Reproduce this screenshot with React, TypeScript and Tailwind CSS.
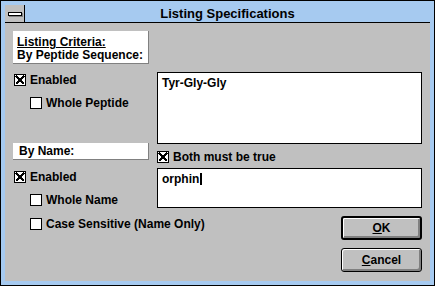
import React from 'react';

const font = { fontFamily: '"Liberation Sans", Arial, sans-serif' };

const CheckBox: React.FC<{ checked?: boolean }> = ({ checked }) => (
    <div className="w-[12px] h-[12px] shrink-0 bg-white border border-black flex items-center justify-center">
        {checked && (
            <svg width="10" height="10" viewBox="0 0 10 10" shapeRendering="crispEdges">
                <path d="M1 1 L9 9 M9 1 L1 9" stroke="#000" strokeWidth="2" />
            </svg>
        )}
    </div>
);

const Check: React.FC<{ label: string; checked?: boolean; className?: string }> = ({ label, checked, className }) => (
    <div className={`flex items-center gap-[4px] h-[12px] whitespace-nowrap ${className ?? ''}`}>
        <CheckBox checked={checked} />
        <span>{label}</span>
    </div>
);

const App: React.FC = () => {
    return (
        <div
            className="w-[435px] h-[286px] border border-black bg-[#a6caf0] p-[4px] flex flex-col text-[12px] font-bold text-black leading-[13px]"
            style={font}
        >
            {/* title bar */}
            <div className="flex h-[18px] border-b border-black shrink-0">
                <div className="w-[20px] h-full bg-[#c0c0c0] border-r border-black flex items-center justify-center">
                    <div className="w-[14px] h-[4px] bg-white border border-black shadow-[1px_1px_0_#808080]" />
                </div>
                <div className="flex-1 flex items-center justify-center text-[13px]">Listing Specifications</div>
            </div>

            {/* client */}
            <div className="flex-1 bg-[#c0c0c0] flex px-[8px] pt-[8px] gap-[8px]">
                <div className="w-[136px] flex flex-col">
                    <div className="h-[33px] bg-white border-r border-b border-[#808080] pl-[4px] pt-[5px] whitespace-nowrap">
                        <div className="underline">Listing Criteria:</div>
                        <div>By Peptide Sequence:</div>
                    </div>
                    <Check label="Enabled" checked className="mt-[10px] ml-[1px]" />
                    <Check label="Whole Peptide" className="mt-[11px] ml-[17px]" />
                    <div className="h-[17px] mt-[34px] bg-white border-r border-b border-[#808080] pl-[6px] flex items-center">
                        By Name:
                    </div>
                    <Check label="Enabled" checked className="mt-[11px] ml-[1px]" />
                    <Check label="Whole Name" className="mt-[11px] ml-[17px]" />
                    <Check label="Case Sensitive (Name Only)" className="mt-[12px] ml-[17px]" />
                </div>

                <div className="w-[265px] flex flex-col">
                    <div className="h-[72px] mt-[41px] bg-white border border-black pl-[4px] pt-[4px]">Tyr-Gly-Gly</div>
                    <Check label="Both must be true" checked className="mt-[7px]" />
                    <div className="h-[40px] mt-[5px] bg-white border border-black pl-[4px] pt-[4px] flex items-start">
                        <span>orphin</span>
                        <span className="w-[2px] h-[12px] bg-black ml-[1px]" />
                    </div>
                    <button className="self-end w-[81px] h-[24px] mt-[8px] bg-[#c0c0c0] border-2 border-black rounded-[3px] shadow-[inset_1px_1px_0_#fff,inset_-2px_-2px_0_#808080] flex items-center justify-center">
                        <span><span className="underline">O</span>K</span>
                    </button>
                    <button className="self-end w-[81px] h-[24px] mt-[8px] bg-[#c0c0c0] border border-black rounded-[3px] shadow-[inset_1px_1px_0_#fff,inset_-2px_-2px_0_#808080] flex items-center justify-center">
                        <span><span className="underline">C</span>ancel</span>
                    </button>
                </div>
            </div>
        </div>
    );
};

export default App;
